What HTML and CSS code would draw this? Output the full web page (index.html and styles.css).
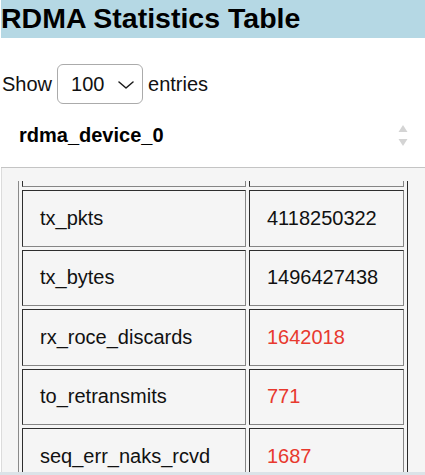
FILE: index.html
```html
<!DOCTYPE html>
<html>
<head>
<meta charset="utf-8">
<title>RDMA Statistics Table</title>
<link rel="stylesheet" href="styles.css">
</head>
<body>
<h1 class="title">RDMA Statistics Table</h1>
<div class="length">
  <span class="length-label">Show</span>
  <div class="select">
    <span class="select-value">100</span>
    <svg class="chev" width="16" height="8" viewBox="0 0 16 8"><path d="M1 1 L8 7 L15 1" fill="none" stroke="#1a1a1a" stroke-width="1.5" stroke-linecap="round" stroke-linejoin="round"/></svg>
  </div>
  <span class="length-label">entries</span>
</div>
<div class="col-head">
  <span class="col-name">rdma_device_0</span>
  <svg class="sort" width="10" height="22" viewBox="0 0 10 22"><path d="M5 0 L9.5 7 L0.5 7 Z" fill="#d4d4d4"/><path d="M0.5 14 L9.5 14 L5 21 Z" fill="#d4d4d4"/></svg>
</div>
<div class="panel">
  <div class="scroll">
    <table class="stats">
      <thead>
        <tr class="ghost"><th class="c-name"></th><th class="c-val"></th></tr>
      </thead>
      <tbody>
        <tr><td class="c-name">tx_pkts</td><td class="c-val">4118250322</td></tr>
        <tr><td class="c-name">tx_bytes</td><td class="c-val">1496427438</td></tr>
        <tr><td class="c-name">rx_roce_discards</td><td class="c-val bad">1642018</td></tr>
        <tr><td class="c-name">to_retransmits</td><td class="c-val bad">771</td></tr>
        <tr><td class="c-name">seq_err_naks_rcvd</td><td class="c-val bad">1687</td></tr>
      </tbody>
    </table>
  </div>
</div>
<div class="strip"></div>
</body>
</html>
```

FILE: styles.css
```css
html, body {
  margin: 0;
  padding: 0;
  background: #ffffff;
  overflow: hidden;
}
body {
  font-family: "Liberation Sans", Arial, sans-serif;
  color: #111;
  width: 425px;
  height: 475px;
}
.title {
  margin: 0 0 0 1px;
  height: 38px;
  line-height: 36px;
  font-size: 28.5px;
  font-weight: bold;
  background: #b5d8e4;
  color: #000;
  white-space: nowrap;
}
.length {
  display: flex;
  align-items: center;
  gap: 5px;
  margin-top: 26px;
  padding-left: 2px;
  height: 40px;
  font-size: 20px;
}
.select {
  box-sizing: border-box;
  width: 86px;
  height: 40px;
  border: 1px solid #ababab;
  border-radius: 6px;
  background: #fff;
  display: flex;
  align-items: center;
  padding-left: 13px;
  gap: 14px;
}
.select-value {
  font-size: 20px;
}
.chev {
  display: block;
  margin-top: 1px;
}
.col-head {
  margin-left: 1px;
  height: 63px;
  border-bottom: 1px solid #c4c4c4;
  display: flex;
  align-items: center;
  justify-content: space-between;
  padding: 0 17px 0 18px;
}
.col-name {
  font-size: 20px;
  font-weight: bold;
  color: #000;
}
.sort {
  display: block;
  margin-top: 1px;
}
.panel {
  margin-left: 1px;
  border-left: 1px solid #dcdcdc;
  background: #f5f5f5;
  padding: 13px 0 0 16px;
}
.scroll {
  height: 291px;
  overflow: hidden;
}
.stats {
  margin-top: -8px;
  table-layout: fixed;
  width: 390px;
  border-collapse: separate;
  border-spacing: 3px;
  border: 1px solid;
  border-color: #8a8a8a #2a2a2a #2a2a2a #8a8a8a;
  font-size: 20px;
}
.stats th,
.stats td {
  box-sizing: border-box;
  border: 1px solid;
  border-color: #2e2e2e #858585 #858585 #2e2e2e;
  padding: 0 0 0 17px;
  text-align: left;
  vertical-align: middle;
  white-space: nowrap;
}
.stats .c-name {
  width: 224px;
}
.stats .c-val {
  width: 155px;
}
.ghost {
  height: 10px;
}
.ghost th {
  padding: 0;
}
.stats tbody tr {
  height: 56.5px;
}
.bad {
  color: #e8392e;
}
.strip {
  height: 10px;
  background: #dbe3e8;
}
```
